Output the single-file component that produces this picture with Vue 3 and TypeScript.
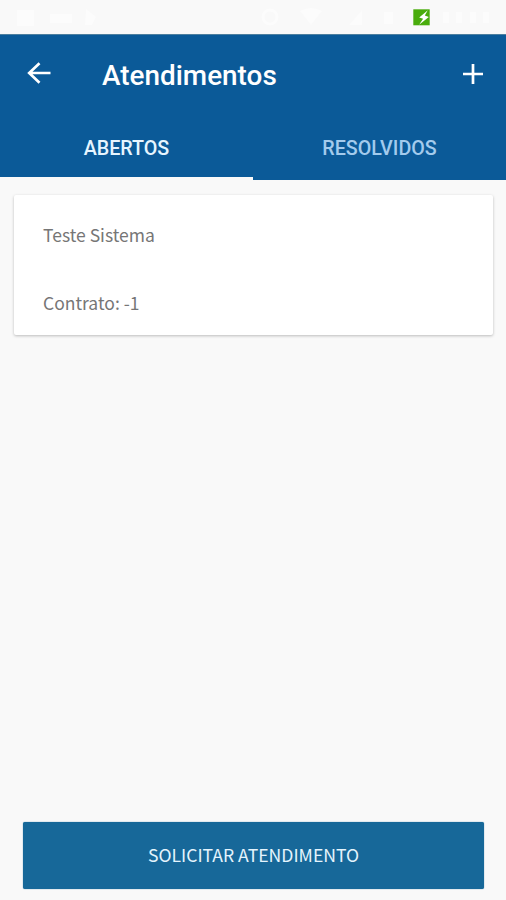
<script setup lang="ts">
import { ref } from 'vue'

interface Ticket {
  title: string
  contract: string
}

type TabId = 'abertos' | 'resolvidos'

const tabs: { id: TabId; label: string }[] = [
  { id: 'abertos', label: 'ABERTOS' },
  { id: 'resolvidos', label: 'RESOLVIDOS' },
]
const active = ref<TabId>('abertos')
const tickets: Record<TabId, Ticket[]> = {
  abertos: [{ title: 'Teste Sistema', contract: '-1' }],
  resolvidos: [],
}
</script>

<template>
  <div class="screen">
    <div class="status">
      <svg class="status-icons" viewBox="0 0 506 34" aria-hidden="true">
        <g class="faint">
          <path d="M17 10h17v16H17zM50 14h22v9H50zM86 9l10 8-4 8h-7z" />
          <path d="M300 11q11-6 22 0l-11 14zM349 25l13-15v15zM384 12h9v12h-9z" />
          <path d="M443 12h6v11h-6zM456 12h6v11h-6zM470 12h6v11h-6zM483 12h6v11h-6z" />
          <circle class="ring" cx="270" cy="17" r="7" />
        </g>
        <path fill="#49ac0c" d="M413.3 9.3h16.4v16h-16.4z" />
        <path fill="#fff" d="M427.8 10.2l-8.6 7.3 3.9 1.3-4 6 9.7-7.8-4-1.5z" />
      </svg>
    </div>
    <header class="header">
      <div class="toolbar">
        <button class="icon-btn" aria-label="Voltar">
          <svg class="back" viewBox="0 0 24 22"><path d="M12.5 1.2 2.2 11l10.3 9.8M2.2 11H23.5" /></svg>
        </button>
        <h1 class="title">Atendimentos</h1>
        <button class="icon-btn" aria-label="Adicionar">
          <svg class="plus" viewBox="0 0 20 20"><path d="M10 0v20M0 10h20" /></svg>
        </button>
      </div>
      <nav class="tabs">
        <button
          v-for="tab in tabs"
          :key="tab.id"
          class="tab"
          :class="{ active: active === tab.id }"
          @click="active = tab.id"
        >
          {{ tab.label }}
        </button>
      </nav>
    </header>
    <main class="list">
      <article v-for="ticket in tickets[active]" :key="ticket.title" class="card">
        <p class="line">{{ ticket.title }}</p>
        <p class="line">Contrato: {{ ticket.contract }}</p>
      </article>
    </main>
    <footer class="footer">
      <button class="request">SOLICITAR ATENDIMENTO</button>
    </footer>
  </div>
</template>

<style>
body {
  margin: 0;
  background: #f9f9f9;
}
</style>

<style scoped>
.screen {
  display: flex;
  flex-direction: column;
  height: 900px;
  box-sizing: border-box;
  background: #f9f9f9;
  font-family: Roboto, sans-serif;
}
button {
  border: 0;
  padding: 0;
  background: none;
  color: inherit;
  font: inherit;
}
.status {
  height: 34px;
  flex: none;
}
.status-icons {
  display: block;
  width: 100%;
  height: 34px;
}
.faint {
  fill: #fff;
  opacity: 0.5;
}
.ring {
  fill: none;
  stroke: #fff;
  stroke-width: 3;
}
.header {
  height: 146px;
  flex: none;
  display: flex;
  flex-direction: column;
  box-sizing: border-box;
  border-top: 1px solid #4d7f9f;
  background: #0b5a98;
  color: #fff;
}
.toolbar {
  height: 77px;
  display: flex;
  align-items: center;
  padding: 0 23px 0 27px;
  box-sizing: border-box;
}
.icon-btn {
  display: flex;
}
.icon-btn svg {
  fill: none;
  stroke: #fff;
  stroke-width: 2.7;
}
.back {
  width: 24px;
  height: 22px;
  margin-bottom: 2px;
}
.plus {
  width: 20px;
  height: 20px;
}
.title {
  flex: 1;
  margin: 4px 0 0 51px;
  font-size: 27.9px;
  line-height: 32px;
  font-weight: 500;
}
.tabs {
  flex: 1;
  display: flex;
}
.tab {
  flex: 1;
  box-sizing: border-box;
  padding-top: 8px;
  border-bottom: 3px solid transparent;
  color: #a3cbed;
  font-size: 19.7px;
  font-weight: 500;
}
.tab.active {
  color: #e6f5ff;
  border-bottom-color: #f9f9f9;
}
.list {
  flex: 1;
  padding: 15px 13px 0 14px;
}
.card {
  height: 140px;
  box-sizing: border-box;
  padding: 26px 29px;
  border-radius: 2px;
  background: #fff;
  box-shadow: 0 1px 3px rgba(0, 0, 0, 0.25);
}
.line {
  margin: 0 0 40px;
  color: #767676;
  font-family: "Noto Sans CJK SC", sans-serif;
  font-size: 17.5px;
  line-height: 28px;
}
.footer {
  padding: 0 22px 11px 23px;
}
.request {
  display: block;
  width: 100%;
  height: 67px;
  padding-bottom: 2px;
  border-radius: 2px;
  background: #176899;
  box-shadow: 0 0 1px #176899;
  color: #e4f4fd;
  font-family: "Noto Sans CJK SC", sans-serif;
  font-size: 17.6px;
}
</style>
